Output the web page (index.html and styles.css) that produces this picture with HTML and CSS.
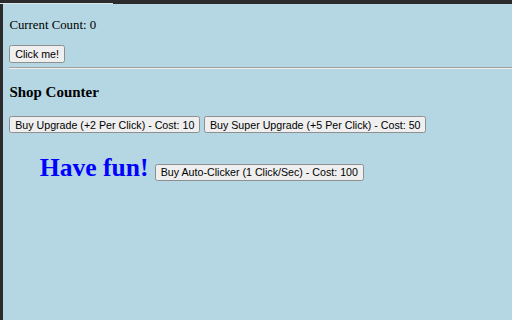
FILE: index.html
```html
<!DOCTYPE html>
<html>
<head>
<meta charset="utf-8">
<link rel="stylesheet" href="styles.css">
</head>
<body>
<div class="topbar"><div class="tab-line"></div></div>
<div class="frame">
  <div class="page">
    <p class="count">Current Count: 0</p>
    <button class="btn">Click me!</button>
    <hr class="rule">
    <h3 class="shop-title">Shop Counter</h3>
    <div class="shop-row">
      <button class="btn">Buy Upgrade (+2 Per Click) - Cost: 10</button>
      <button class="btn">Buy Super Upgrade (+5 Per Click) - Cost: 50</button>
    </div>
    <div class="fun-row">
      <h1 class="fun">Have fun!</h1>
      <button class="btn">Buy Auto-Clicker (1 Click/Sec) - Cost: 100</button>
    </div>
  </div>
</div>
</body>
</html>
```
FILE: styles.css
```css
html, body {
  margin: 0;
  padding: 0;
  height: 100%;
  background: #2b2b2d;
  overflow: hidden;
}
.topbar {
  height: 4px;
  background: #2b2b2d;
  position: relative;
}
.tab-line {
  position: absolute;
  left: 0;
  bottom: 0;
  width: 113px;
  height: 1px;
  background: #d8e6ea;
}
.frame {
  margin-left: 3px;
  height: 316px;
  background: #b4d7e3;
  overflow: hidden;
  border-top: 1px solid #9fb9c2;
  margin-top: -1px;
}
.page {
  zoom: 0.8;
  padding: 8px;
  font-family: "Liberation Serif", "Times New Roman", serif;
  font-size: 16px;
  color: #000;
}
.count {
  margin: 9px 0 16px;
}
.btn {
  font-family: "Liberation Sans", Arial, sans-serif;
  font-size: 13.333px;
  color: #000;
  background: #efefef;
  border: 1px solid #8f8f8f;
  border-radius: 3px;
  padding: 2px 6px;
  line-height: normal;
}
.rule {
  margin: 6px -8px 8px 0;
  border: 0;
  border-top: 1px solid #a0a0a0;
  border-bottom: 1px solid #f0f0f0;
}
.shop-title {
  font-size: 18.72px;
  font-weight: bold;
  margin: 18.72px 0;
}
.shop-row {
  display: flex;
  gap: 5px;
}
.fun-row {
  display: flex;
  align-items: baseline;
  gap: 8px;
  padding-left: 38px;
}
.fun {
  color: #0000ff;
  font-size: 32px;
  font-weight: bold;
  margin: 25px 0 21.44px;
}
```
